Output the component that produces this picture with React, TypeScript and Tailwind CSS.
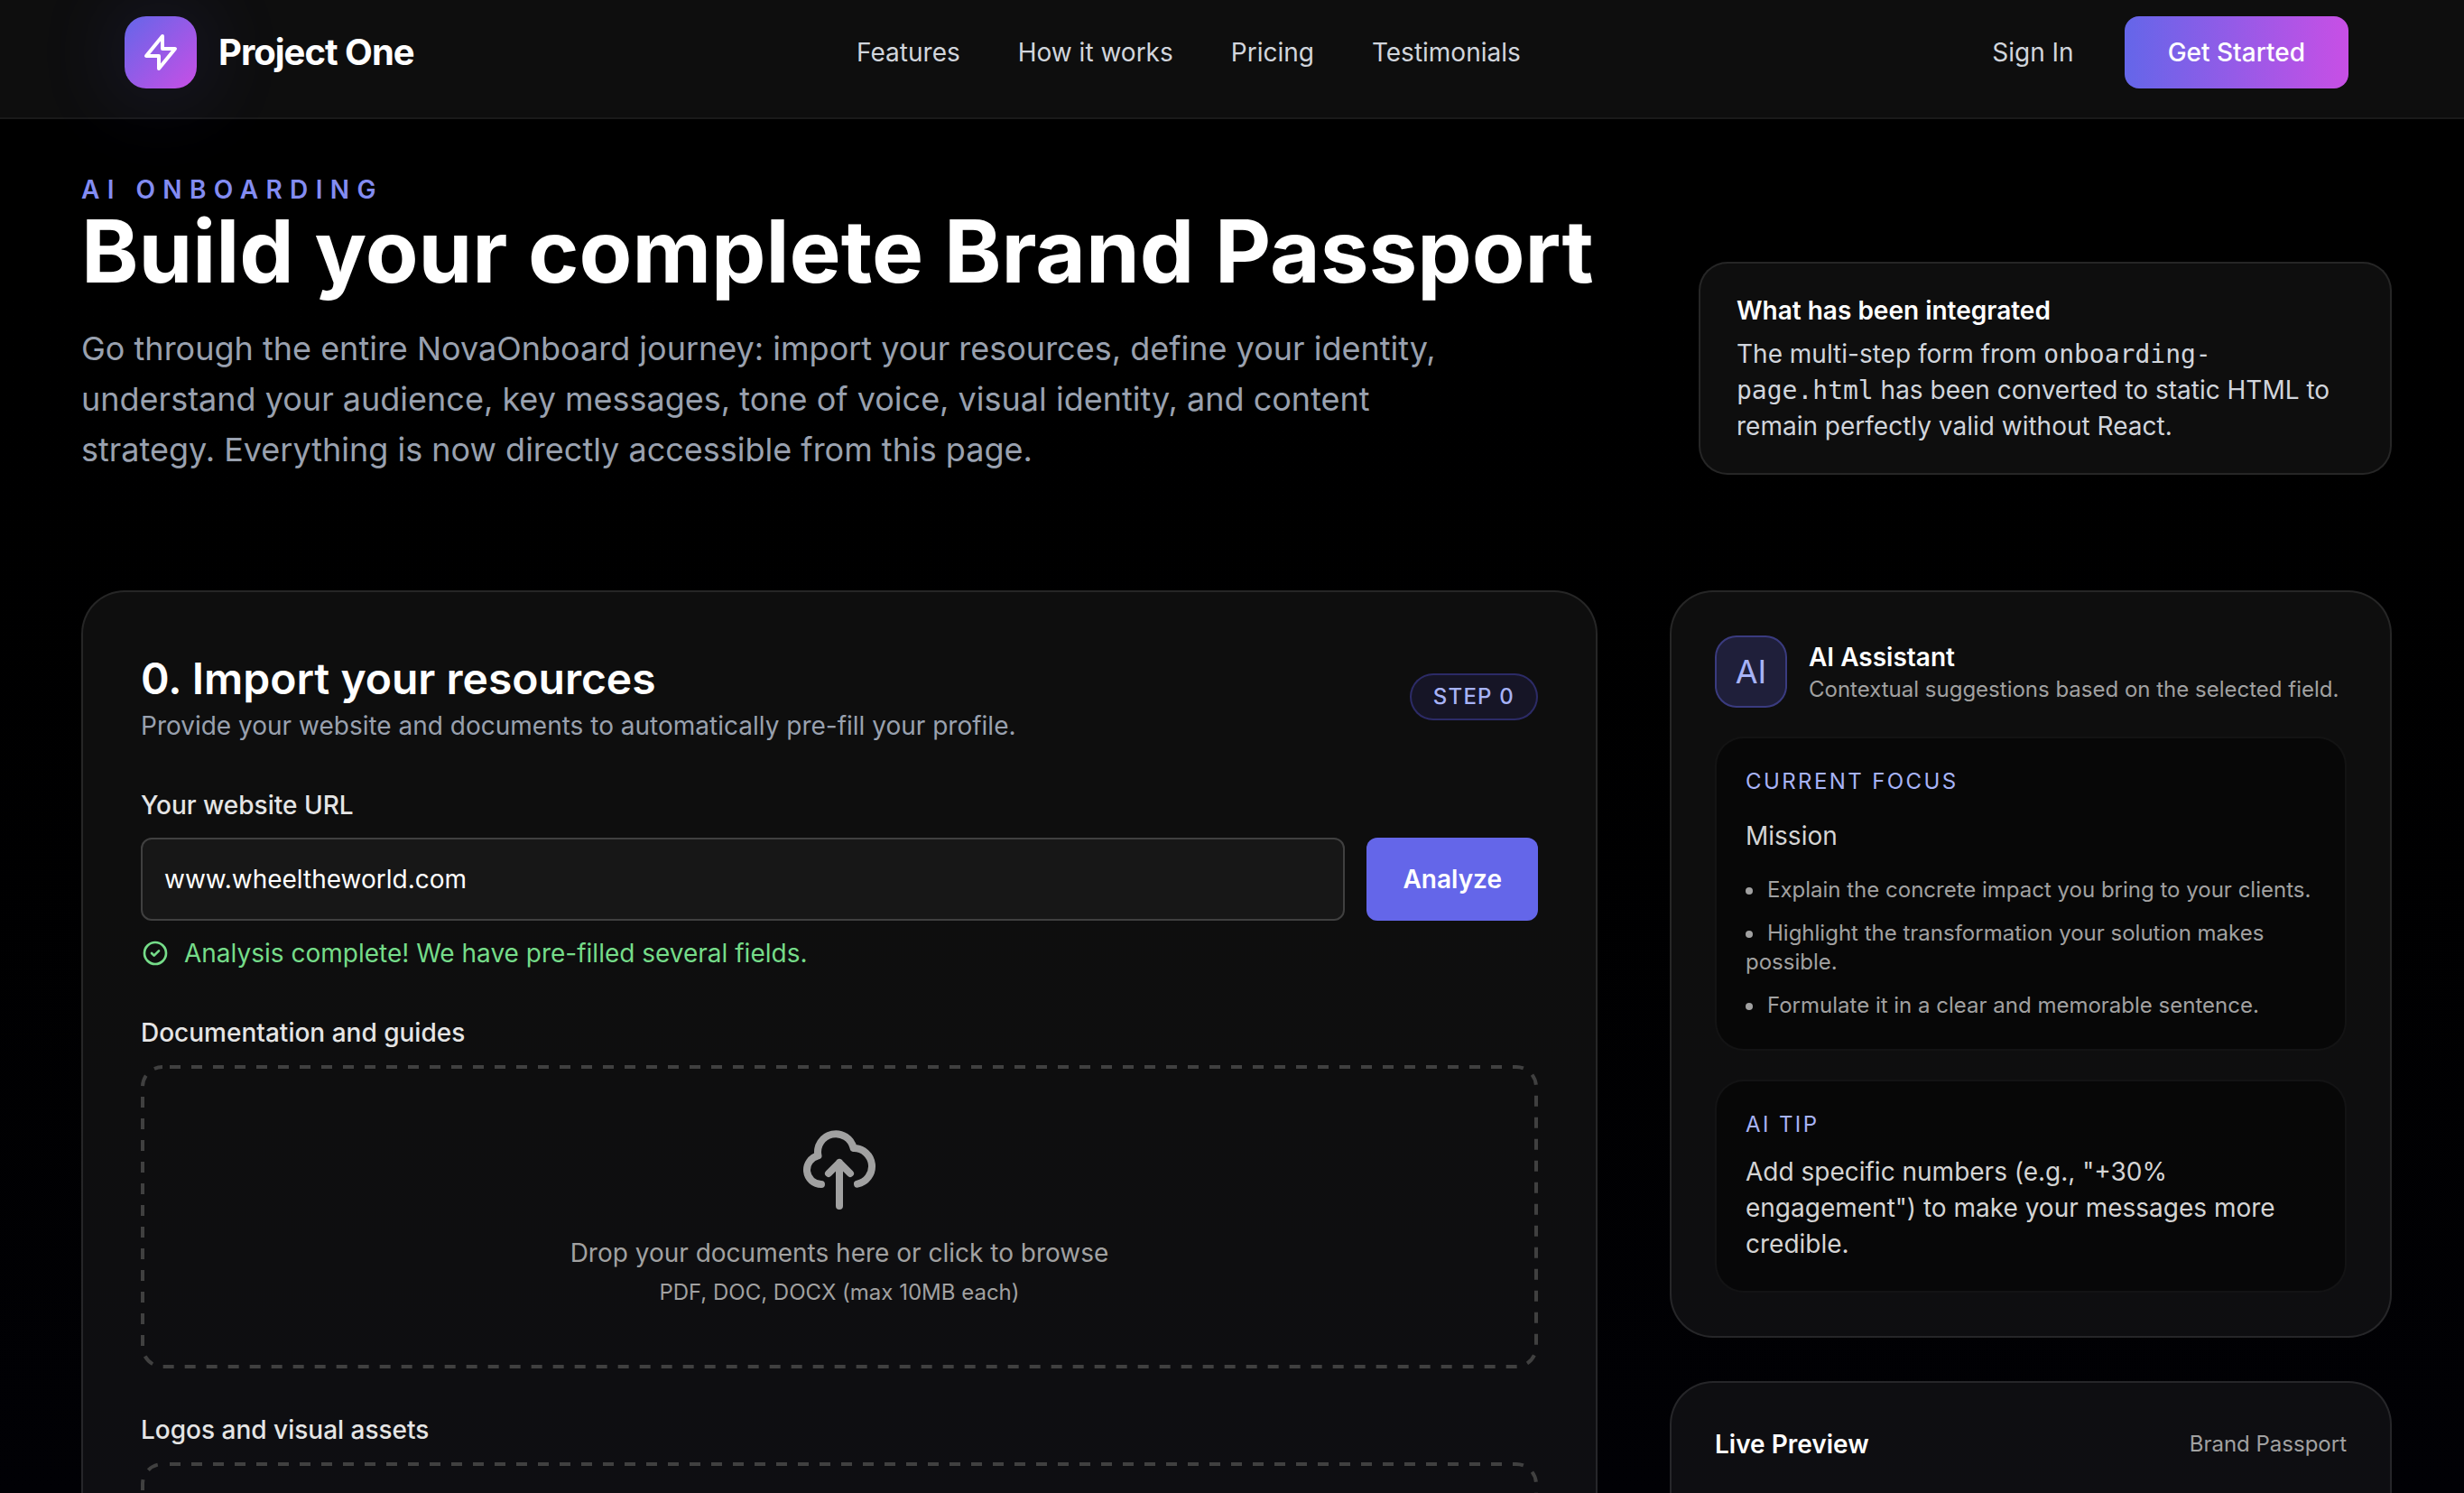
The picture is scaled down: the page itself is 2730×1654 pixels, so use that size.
import type { ReactNode } from "react";

const navLinks = ["Features", "How it works", "Pricing", "Testimonials"];

const focusHints = [
  "Explain the concrete impact you bring to your clients.",
  "Highlight the transformation your solution makes possible.",
  "Formulate it in a clear and memorable sentence.",
];

function BoltIcon() {
  return (
    <svg className="size-12" viewBox="0 0 24 24" fill="none" stroke="currentColor" strokeWidth="2" strokeLinecap="round" strokeLinejoin="round" aria-hidden="true">
      <path d="M13 10V3L4 14h7v7l9-11h-7z" />
    </svg>
  );
}

function CheckCircleIcon() {
  return (
    <svg className="size-8 shrink-0" viewBox="0 0 24 24" fill="none" stroke="currentColor" strokeWidth="2" strokeLinecap="round" strokeLinejoin="round" aria-hidden="true">
      <path d="M9 12l2 2 4-4m6 2a9 9 0 11-18 0 9 9 0 0118 0z" />
    </svg>
  );
}

function CloudUploadIcon() {
  return (
    <svg className="size-24" viewBox="0 0 24 24" fill="none" stroke="currentColor" strokeWidth="2" strokeLinecap="round" strokeLinejoin="round" aria-hidden="true">
      <path d="M7 16a4 4 0 01-.88-7.903A5 5 0 1115.9 6L16 6a5 5 0 011 9.9M15 13l-3-3m0 0l-3 3m3-3v12" />
    </svg>
  );
}

/* Evenly spaced dashes following the rounded outline of the parent. */
function DashedOutline() {
  return (
    <svg className="pointer-events-none absolute inset-0 size-full text-neutral-700" fill="none" aria-hidden="true">
      <rect
        className="h-[calc(100%-4px)] w-[calc(100%-4px)]"
        x="2"
        y="2"
        rx="22"
        stroke="currentColor"
        strokeWidth="4"
        strokeDasharray="12 12"
        strokeDashoffset="-8"
      />
    </svg>
  );
}

function Header() {
  return (
    <header className="flex items-center justify-between border-b-2 border-white/5 bg-white/[0.055] pt-[18px] pr-32 pb-8 pl-[138px]">
      <a href="#home" className="flex items-center gap-6">
        <span className="flex size-20 items-center justify-center rounded-3xl bg-linear-to-br/srgb from-[#6466e9] to-[#c84fe5] text-white shadow-[0_0_100px_rgba(99,102,241,0.2)]">
          <BoltIcon />
        </span>
        <span className="text-[40px] leading-[56px] font-bold tracking-tight text-white">Project One</span>
      </a>
      <nav className="flex items-center gap-16 text-gray-300">
        {navLinks.map((label) => (
          <a key={label} href="#section">{label}</a>
        ))}
      </nav>
      <div className="flex items-center gap-6">
        <button type="button" className="px-8 text-gray-300">Sign In</button>
        <button type="button" className="rounded-2xl bg-linear-to-r/srgb from-[#6466e9] to-[#c84fe5] px-12 py-5 font-medium text-white">
          Get Started
        </button>
      </div>
    </header>
  );
}

function Hero() {
  return (
    <section className="flex items-end justify-between gap-20">
      <div>
        <p className="font-semibold tracking-[0.3em] text-[#838cf2]">AI ONBOARDING</p>
        <h1 className="text-[96px] leading-[96px] font-bold text-white">Build your complete Brand Passport</h1>
        <p className="mt-8 max-w-[1536px] text-[36px] leading-[56px] text-gray-400">
          Go through the entire NovaOnboard journey: import your resources, define your identity, understand your
          audience, key messages, tone of voice, visual identity, and content strategy. Everything is now directly
          accessible from this page.
        </p>
      </div>
      <div className="w-[768px] shrink-0 rounded-[32px] border-2 border-white/10 bg-white/[0.055] px-10 py-8">
        <p className="font-semibold text-white">What has been integrated</p>
        <p className="mt-2 text-gray-300">
          The multi-step form from{" "}
          <code className="font-['DejaVu_Sans_Mono',monospace] leading-8">
            onboarding-
            <br />
            page.html
          </code>{" "}
          has been converted to static HTML to remain perfectly valid without React.
        </p>
      </div>
    </section>
  );
}

function Dropzone({ id, label, children }: { id: string; label: string; children?: ReactNode }) {
  return (
    <div className="mt-12">
      <label htmlFor={id} className="block font-medium text-neutral-200">{label}</label>
      <button
        id={id}
        type="button"
        className="relative mt-4 flex w-full flex-col items-center rounded-3xl p-[68px] text-neutral-400"
      >
        <DashedOutline />
        <CloudUploadIcon />
        {children}
      </button>
    </div>
  );
}

function ImportCard() {
  return (
    <section className="rounded-[48px] border-2 border-white/10 bg-white/[0.055] p-16">
      <div className="flex items-center justify-between">
        <div>
          <h2 className="text-[48px] leading-[64px] font-semibold text-white">0. Import your resources</h2>
          <p className="text-gray-400">Provide your website and documents to automatically pre-fill your profile.</p>
        </div>
        <span className="rounded-full border-2 border-indigo-500/30 bg-indigo-500/10 px-6 py-2 text-[24px] leading-[32px] font-medium tracking-wider text-[#a7b3f7]">
          STEP 0
        </span>
      </div>

      <label htmlFor="website" className="mt-12 block font-medium text-neutral-200">Your website URL</label>
      <div className="mt-4 flex gap-6">
        <input
          id="website"
          type="text"
          defaultValue="www.wheeltheworld.com"
          className="min-w-0 flex-1 rounded-xl border-2 border-neutral-700 bg-neutral-900 px-6 py-6 text-white outline-none"
        />
        <button type="button" className="rounded-xl bg-[#6466e9] px-10 font-semibold text-white">Analyze</button>
      </div>
      <p className="mt-4 flex items-center gap-4 text-[#75dc89]">
        <CheckCircleIcon />
        Analysis complete! We have pre-filled several fields.
      </p>

      <Dropzone id="documents" label="Documentation and guides">
        <span className="mt-6">Drop your documents here or click to browse</span>
        <span className="mt-2 text-[24px] leading-[32px]">PDF, DOC, DOCX (max 10MB each)</span>
      </Dropzone>
      <Dropzone id="logos" label="Logos and visual assets" />
    </section>
  );
}

function SideCard({ children }: { children: ReactNode }) {
  return <section className="rounded-[48px] border-2 border-white/10 bg-white/[0.055] p-12">{children}</section>;
}

function Panel({ title, children }: { title: string; children?: ReactNode }) {
  return (
    <div className="mt-8 rounded-[32px] border-2 border-white/5 bg-black/50 p-8">
      <h4 className="text-[24px] leading-[32px] tracking-widest text-[#a7b3f7]">{title}</h4>
      {children}
    </div>
  );
}

function Sidebar() {
  return (
    <aside className="flex flex-col gap-12">
      <SideCard>
        <div className="flex items-center gap-6">
          <span className="flex size-20 items-center justify-center rounded-3xl border-2 border-[#6466e9]/40 bg-[#6466e9]/20 text-[36px] leading-[56px] text-[#a7b3f7]">
            AI
          </span>
          <div>
            <h3 className="font-semibold text-white">AI Assistant</h3>
            <p className="text-[24px] leading-[32px] text-neutral-400">Contextual suggestions based on the selected field.</p>
          </div>
        </div>
        <Panel title="CURRENT FOCUS">
          <p className="mt-6 text-neutral-300">Mission</p>
          <ul className="mt-6 space-y-4 text-[24px] leading-[32px] text-neutral-400">
            {focusHints.map((hint) => (
              <li
                key={hint}
                className="before:mr-4 before:inline-block before:size-2 before:rounded-full before:bg-current before:align-middle before:content-['']"
              >
                {hint}
              </li>
            ))}
          </ul>
        </Panel>
        <Panel title="AI TIP">
          <p className="mt-4 text-neutral-300">
            Add specific numbers (e.g., "+30% engagement") to make your messages more credible.
          </p>
        </Panel>
      </SideCard>
      <SideCard>
        <div className="flex items-center justify-between pb-32">
          <h3 className="font-semibold text-white">Live Preview</h3>
          <span className="text-[24px] leading-[32px] text-neutral-400">Brand Passport</span>
        </div>
      </SideCard>
    </aside>
  );
}

export default function App() {
  return (
    <div className="h-screen overflow-y-auto bg-linear-to-b from-black to-[#010105] font-['Inter',sans-serif] text-[28px] leading-[40px] [scrollbar-width:none]">
      <Header />
      <main className="pt-[58px] pr-20 pb-20 pl-[90px]">
        <Hero />
        <div className="mt-32 grid grid-cols-[minmax(0,1fr)_800px] items-start gap-20">
          <ImportCard />
          <Sidebar />
        </div>
      </main>
    </div>
  );
}
